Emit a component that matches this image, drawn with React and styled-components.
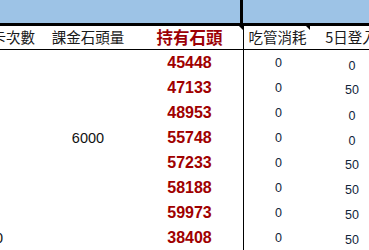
import React from "react";
import styled, { createGlobalStyle } from "styled-components";

const Global = createGlobalStyle`
  html, body { margin: 0; padding: 0; background: #fff; }
  body { width: 369px; height: 250px; overflow: hidden; }
`;

const Page = styled.div`
  width: 369px;
  height: 250px;
  overflow: hidden;
  background: #fff;
  font-family: "Liberation Sans", Arial, sans-serif;
`;

const TopBand = styled.div`
  display: grid;
  grid-template-columns: 243px 1fr;
  height: 23px;
  border-bottom: 3px solid #000;
`;

const BlueCell = styled.div`
  background: #9dc3e6;
  border-right: ${(p) => (p.$divider ? "3px solid #000" : "none")};
`;

const Sheet = styled.div`
  display: grid;
  grid-template-columns: 40px 96px 108px 67px 80px;
  width: 391px;
`;

const Cell = styled.div`
  position: relative;
  box-sizing: border-box;
  display: flex;
  align-items: center;
  justify-content: ${(p) => p.$justify || "center"};
  padding-right: ${(p) => p.$pr || 0}px;
  padding-left: ${(p) => p.$pl || 0}px;
  padding-top: ${(p) => p.$pt || 0}px;
  white-space: nowrap;
  border-bottom: ${(p) => (p.$head ? "1px solid #000" : "none")};
  border-right: ${(p) => (p.$divider ? "1px solid #000" : "none")};
  height: ${(p) => (p.$head ? "24px" : "25px")};
`;

const HeadText = styled.span`
  font-family: "Noto Sans CJK TC", "Noto Sans CJK SC", sans-serif;
  font-size: 14.5px;
  color: #1a1a1a;
  line-height: 1;
`;

const HeadRed = styled(HeadText)`
  font-size: 16.5px;
  font-weight: 700;
  color: #9c0006;
`;

const Comment = styled.span`
  position: absolute;
  top: 0;
  right: ${(p) => p.$r || 0}px;
  width: 0;
  height: 0;
  border-top: 4px solid #000;
  border-left: 4px solid transparent;
`;

const Amount = styled.span`
  font-size: 14.5px;
  color: #111;
  line-height: 1;
`;

const Stone = styled.span`
  font-size: 16px;
  font-weight: 700;
  color: #a00000;
  line-height: 1;
`;

const Small = styled.span`
  font-size: 12.5px;
  color: #10243a;
  line-height: 1;
`;

const stones = [
  [45448, 0, 0],
  [47133, 0, 50],
  [48953, 0, 0],
  [55748, 0, 0],
  [57233, 0, 50],
  [58188, 0, 50],
  [59973, 0, 50],
  [38408, 0, 50],
];

export default function App() {
  return (
    <Page>
      <Global />
      <TopBand>
        <BlueCell $divider />
        <BlueCell />
      </TopBand>
      <Sheet>
        <Cell $head $justify="flex-end" $pr={5}>
          <HeadText>抽卡次數</HeadText>
        </Cell>
        <Cell $head>
          <HeadText>課金石頭量</HeadText>
        </Cell>
        <Cell $head $divider>
          <HeadRed>持有石頭</HeadRed>
          <Comment $r={0} />
        </Cell>
        <Cell $head>
          <HeadText>吃管消耗</HeadText>
          <Comment $r={1} />
        </Cell>
        <Cell $head>
          <HeadText>5日登入</HeadText>
        </Cell>
        {stones.map(([s, a, b], i) => (
          <React.Fragment key={i}>
            <Cell $justify="flex-end" $pr={37} $pt={2}>
              {i === 7 ? <Amount>3000</Amount> : null}
            </Cell>
            <Cell $pt={2}>{i === 3 ? <Amount>6000</Amount> : null}</Cell>
            <Cell $divider>
              <Stone>{s}</Stone>
            </Cell>
            <Cell $pt={1} $pl={2}>
              <Small>{a}</Small>
            </Cell>
            <Cell $pt={b === 50 ? 6 : 7} $pl={2}>
              <Small>{b}</Small>
            </Cell>
          </React.Fragment>
        ))}
      </Sheet>
    </Page>
  );
}
